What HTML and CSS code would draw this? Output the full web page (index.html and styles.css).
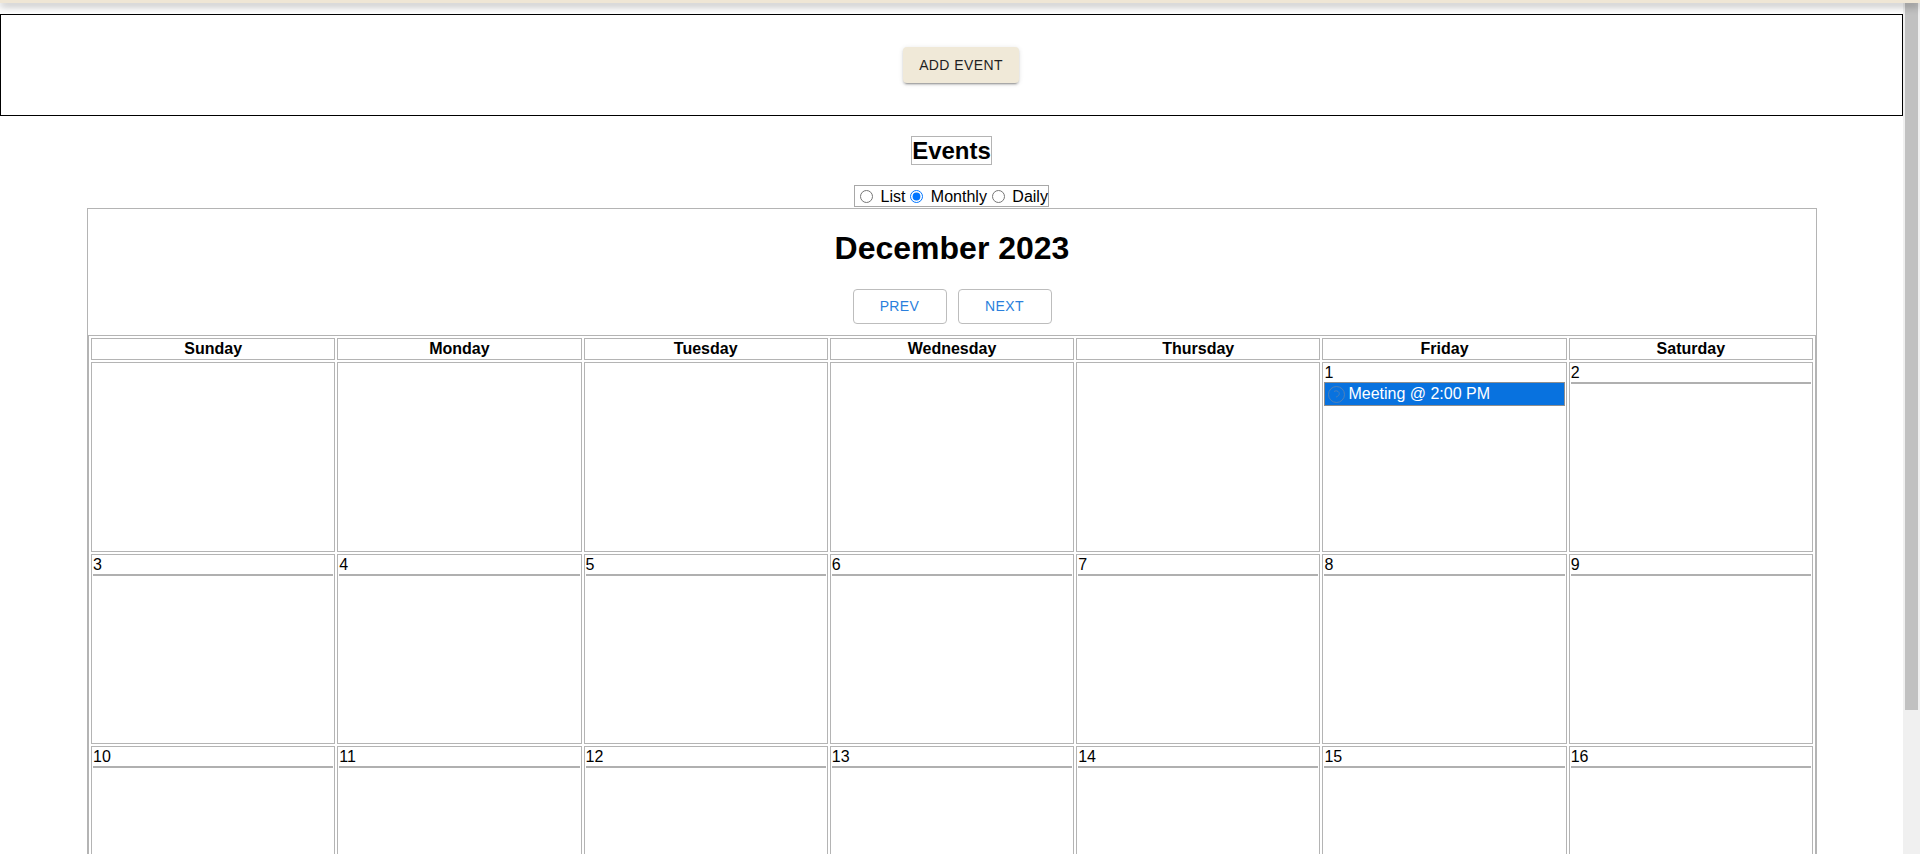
FILE: index.html
```html
<!DOCTYPE html>
<html lang="en">
<head>
<meta charset="utf-8">
<title>Events</title>
<link rel="stylesheet" href="styles.css">
</head>
<body>
<div class="topbar"></div>
<div class="page">
  <main class="main">
    <section class="toolbar">
      <button class="btn-add" type="button">Add Event</button>
    </section>
    <section class="heading">
      <h2 class="events-title">Events</h2>
      <div class="views"><input type="radio" name="view"> List<input type="radio" name="view" checked> Monthly<input type="radio" name="view"> Daily</div>
    </section>
    <section class="calendar">
      <h1 class="month">December 2023</h1>
      <div class="nav">
        <button class="btn-nav" type="button">Prev</button>
        <button class="btn-nav" type="button">Next</button>
      </div>
      <table class="grid">
        <thead>
          <tr>
            <th>Sunday</th><th>Monday</th><th>Tuesday</th><th>Wednesday</th><th>Thursday</th><th>Friday</th><th>Saturday</th>
          </tr>
        </thead>
        <tbody>
          <tr class="week">
            <td></td><td></td><td></td><td></td><td></td>
            <td><div class="num plain">1</div>
              <div class="event"><svg class="ev-icon" width="19" height="19" viewBox="0 0 19 19"><circle cx="9.5" cy="9.5" r="8" fill="none" stroke="#6f88a6" stroke-opacity="0.7" stroke-width="1"/><path d="M7 6.5c1.5-1 4-1 5 1s-1 4-3 4.5" fill="none" stroke="#6f88a6" stroke-opacity="0.6" stroke-width="1"/></svg>Meeting @ 2:00 PM</div>
            </td>
            <td><div class="num">2</div></td>
          </tr>
          <tr class="week">
            <td><div class="num">3</div></td>
            <td><div class="num">4</div></td>
            <td><div class="num">5</div></td>
            <td><div class="num">6</div></td>
            <td><div class="num">7</div></td>
            <td><div class="num">8</div></td>
            <td><div class="num">9</div></td>
          </tr>
          <tr class="week">
            <td><div class="num">10</div></td>
            <td><div class="num">11</div></td>
            <td><div class="num">12</div></td>
            <td><div class="num">13</div></td>
            <td><div class="num">14</div></td>
            <td><div class="num">15</div></td>
            <td><div class="num">16</div></td>
          </tr>
        </tbody>
      </table>
    </section>
  </main>
  <div class="scrollbar"><div class="thumb"></div></div>
</div>
</body>
</html>
```

FILE: styles.css
```css
html, body {
  margin: 0;
  padding: 0;
  height: 854px;
  overflow: hidden;
  background: #ffffff;
  font-family: "Liberation Sans", Arial, sans-serif;
  font-size: 16px;
  color: #000;
}

.topbar {
  position: relative;
  z-index: 2;
  height: 3px;
  background: #efe6d5;
  box-shadow: 0 2px 8px rgba(0, 0, 0, 0.55);
}

.page {
  display: flex;
  height: 851px;
}

.main {
  flex: 1 1 auto;
  min-width: 0;
  padding-top: 11px;
}

.scrollbar {
  flex: 0 0 17px;
  background: #f0f0f0;
  display: flex;
  justify-content: center;
}

.thumb {
  width: 13px;
  height: 707px;
  background: #c1c1c1;
}

.toolbar {
  border: 1px solid #000;
  padding: 31.5px 0;
  display: flex;
  justify-content: center;
}

.btn-add {
  margin-left: 19px;
  font-family: "Liberation Sans", Arial, sans-serif;
  font-size: 14px;
  letter-spacing: 0.4px;
  line-height: 24.5px;
  text-transform: uppercase;
  color: #1f1f1f;
  background: #f0e9d8;
  border: none;
  border-radius: 4px;
  padding: 6px 16px;
  box-shadow: 0 3px 1px -2px rgba(0, 0, 0, 0.2), 0 2px 2px 0 rgba(0, 0, 0, 0.14), 0 1px 5px 0 rgba(0, 0, 0, 0.12);
}

.heading {
  display: flex;
  flex-direction: column;
  align-items: center;
}

.events-title {
  margin: 20px 0;
  font-size: 24px;
  font-weight: bold;
  line-height: 27.6px;
  border: 1px solid #b4b4b4;
}

.views {
  height: 22px;
  box-sizing: border-box;
  margin-bottom: 1px;
  border: 1px solid #a8a8a8;
  line-height: 21px;
  white-space: nowrap;
}

.views input {
  width: 13px;
  height: 13px;
  margin: 3px 3px 0 5px;
  vertical-align: -1px;
}

.calendar {
  width: 1730px;
  box-sizing: border-box;
  margin-left: 87px;
  border: 1px solid #b4b4b4;
}

.month {
  margin: 21.4px 0;
  text-align: center;
  font-size: 32px;
  line-height: 36.8px;
  font-weight: bold;
}

.nav {
  display: flex;
  justify-content: center;
  gap: 11px;
  margin-bottom: 11px;
}

.btn-nav {
  width: 94px;
  height: 35px;
  box-sizing: border-box;
  font-family: "Liberation Sans", Arial, sans-serif;
  font-size: 14px;
  letter-spacing: 0.4px;
  text-transform: uppercase;
  color: #2a7fdc;
  background: #fff;
  border: 1px solid #bdbdbd;
  border-radius: 4px;
  padding: 0;
}

.grid {
  width: 100%;
  table-layout: fixed;
  border-collapse: separate;
  border-spacing: 2px;
  border: 1px solid #b4b4b4;
}

.grid th {
  border: 1px solid #b4b4b4;
  padding: 1px;
  font-weight: bold;
  line-height: 18.4px;
}

.week {
  height: 190px;
}

.grid td {
  border: 1px solid #b4b4b4;
  padding: 1px;
  vertical-align: top;
  line-height: 18.4px;
}

.num {
  border-bottom: 2px solid #b0b0b0;
  line-height: 18.4px;
}

.num.plain {
  border-bottom: none;
}

.event {
  display: flex;
  align-items: center;
  height: 24px;
  box-sizing: border-box;
  border: 1px solid #8f8f8f;
  background: #0872df;
  color: #fff;
  white-space: nowrap;
  overflow: hidden;
}

.ev-icon {
  flex: 0 0 auto;
  margin: 0 2px 0 2px;
}
```
